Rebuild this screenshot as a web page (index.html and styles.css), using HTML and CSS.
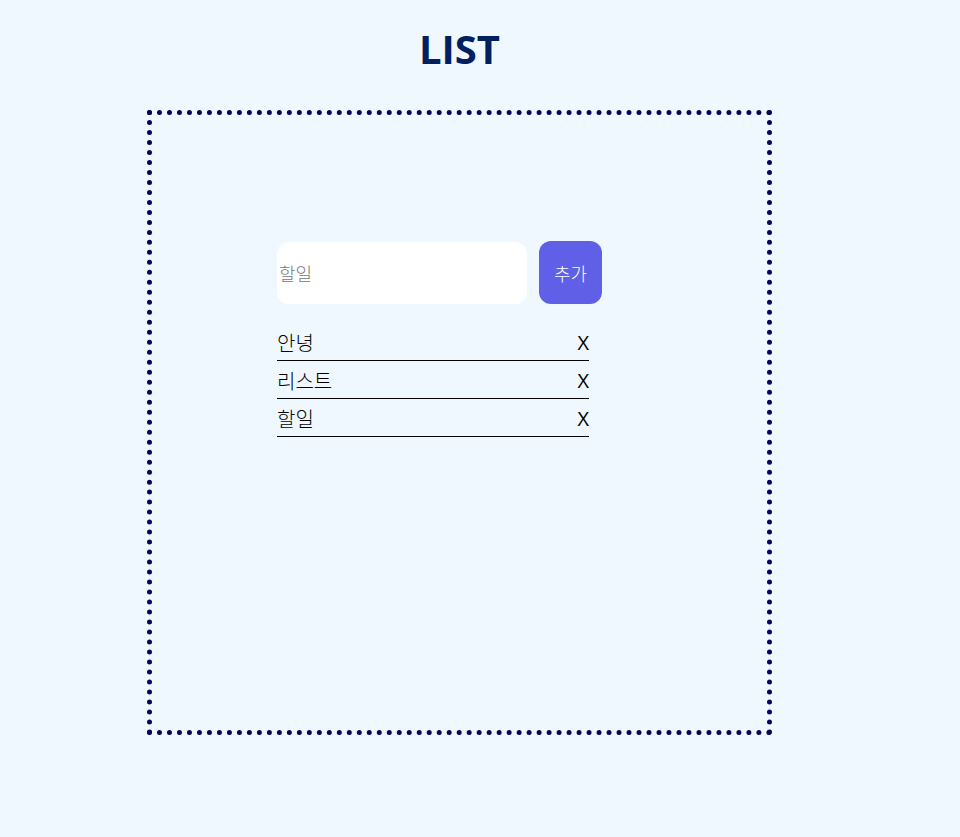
FILE: index.html
```html
<!DOCTYPE html>
<html lang="ko">
<head>
<meta charset="utf-8">
<title>LIST</title>
<link rel="stylesheet" href="styles.css">
</head>
<body>
<div class="page">
  <h1 class="title">LIST</h1>
  <div class="board">
    <form class="add-form">
      <input class="todo-input" type="text" placeholder="할일">
      <button class="add-btn" type="button">추가</button>
    </form>
    <ul class="todo-list">
      <li class="todo-item"><span class="todo-text">안녕</span><span class="todo-del">X</span></li>
      <li class="todo-item"><span class="todo-text">리스트</span><span class="todo-del">X</span></li>
      <li class="todo-item"><span class="todo-text">할일</span><span class="todo-del">X</span></li>
    </ul>
  </div>
</div>
</body>
</html>
```
FILE: styles.css
```css
html, body {
  margin: 0;
  padding: 0;
  background: #f0f8ff;
}
body {
  font-family: "Noto Sans CJK KR", "Open Sans", sans-serif;
  color: #000;
}
.page {
  width: 919px;
  padding-top: 22px;
}
.title {
  margin: 0 0 34px;
  text-align: center;
  font-family: "Open Sans", sans-serif;
  font-weight: 700;
  font-size: 40px;
  line-height: 54px;
  color: #002060;
}
.board {
  box-sizing: border-box;
  width: 625px;
  height: 625px;
  margin: 0 auto;
  border: 5px dotted #050560;
  padding: 126px 0 0 125px;
}
.add-form {
  display: flex;
  align-items: center;
  gap: 12px;
  margin: 0;
}
.todo-input {
  box-sizing: border-box;
  width: 250px;
  height: 62px;
  border: none;
  border-radius: 12px;
  background: #fff;
  padding: 0 2px;
  font-family: "Noto Sans CJK KR", sans-serif;
  font-weight: 300;
  font-size: 18px;
  outline: none;
}
.todo-input::placeholder {
  color: #777;
}
.add-btn {
  box-sizing: border-box;
  width: 63px;
  height: 63px;
  border: none;
  border-radius: 12px;
  background: #5f5fe8;
  color: #fff;
  font-family: "Noto Sans CJK KR", sans-serif;
  font-weight: 300;
  font-size: 18px;
  padding: 0;
}
.todo-list {
  list-style: none;
  margin: 19px 0 0;
  padding: 0;
  width: 312px;
}
.todo-item {
  display: flex;
  justify-content: space-between;
  align-items: center;
  font-size: 20px;
  font-weight: 300;
  line-height: 29px;
  padding: 5px 0 3px;
  border-bottom: 1px solid #000;
}
.todo-del {
  font-family: "Open Sans", sans-serif;
  font-weight: 400;
}
```
